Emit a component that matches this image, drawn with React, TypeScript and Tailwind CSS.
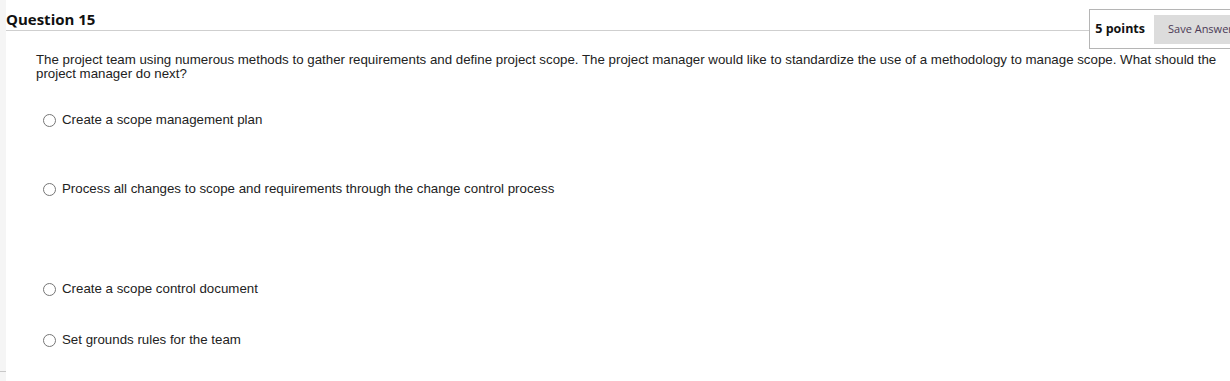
const options = [
  { label: 'Create a scope management plan', gap: 'mt-[32px]' },
  { label: 'Process all changes to scope and requirements through the change control process', gap: 'mt-[55px]' },
  { label: 'Create a scope control document', gap: 'mt-[86px]' },
  { label: 'Set grounds rules for the team', gap: 'mt-[37px]' },
];

export default function App() {
  return (
    <div className="flex h-[381px] w-[1230px] overflow-hidden bg-white">
      <div className="flex w-[6px] shrink-0 flex-col bg-[#f5f5f5]">
        <div className="h-[371px]" />
        <div className="h-px bg-[#c8c8c8]" />
      </div>
      <div className="flex min-w-0 flex-1 flex-col">
        <div className="flex items-start">
          <div className="flex h-[31px] flex-1 items-end border-b border-[#cfcfcf] pb-[1px]">
            <h2 className="text-[15px] font-bold leading-[20px] text-[#111] [font-family:'Open_Sans',sans-serif]">Question 15</h2>
          </div>
          <div className="mt-[9px] flex h-[40px] shrink-0 items-center gap-[9px] border border-r-0 border-[#b5b5b5] bg-white pl-[5px] pt-[1px]">
            <span className="text-[12.5px] font-bold text-[#111] [font-family:'Open_Sans',sans-serif]">5 points</span>
            <button className="h-[29px] w-[76px] overflow-hidden whitespace-nowrap bg-[#dcdcdc] pl-[14px] text-left text-[11px] text-[#4b3a55] [font-family:'Open_Sans',sans-serif]">
              Save Answer
            </button>
          </div>
        </div>
        <div className="pl-[30px] text-[13.3px] leading-[14px] text-[#222] [font-family:'Liberation_Sans',Arial,sans-serif]">
          <p className="mt-[4px]">
            The project team using numerous methods to gather requirements and define project scope. The project manager would like to standardize the use of a methodology to manage scope. What should the project manager do next?
          </p>
          {options.map(o => (
            <label key={o.label} className={`${o.gap} flex items-center gap-[6px] pl-[7px]`}>
              <span className="h-[13px] w-[13px] shrink-0 rounded-full border border-[#767676] bg-white" />
              <span>{o.label}</span>
            </label>
          ))}
        </div>
      </div>
    </div>
  );
}
